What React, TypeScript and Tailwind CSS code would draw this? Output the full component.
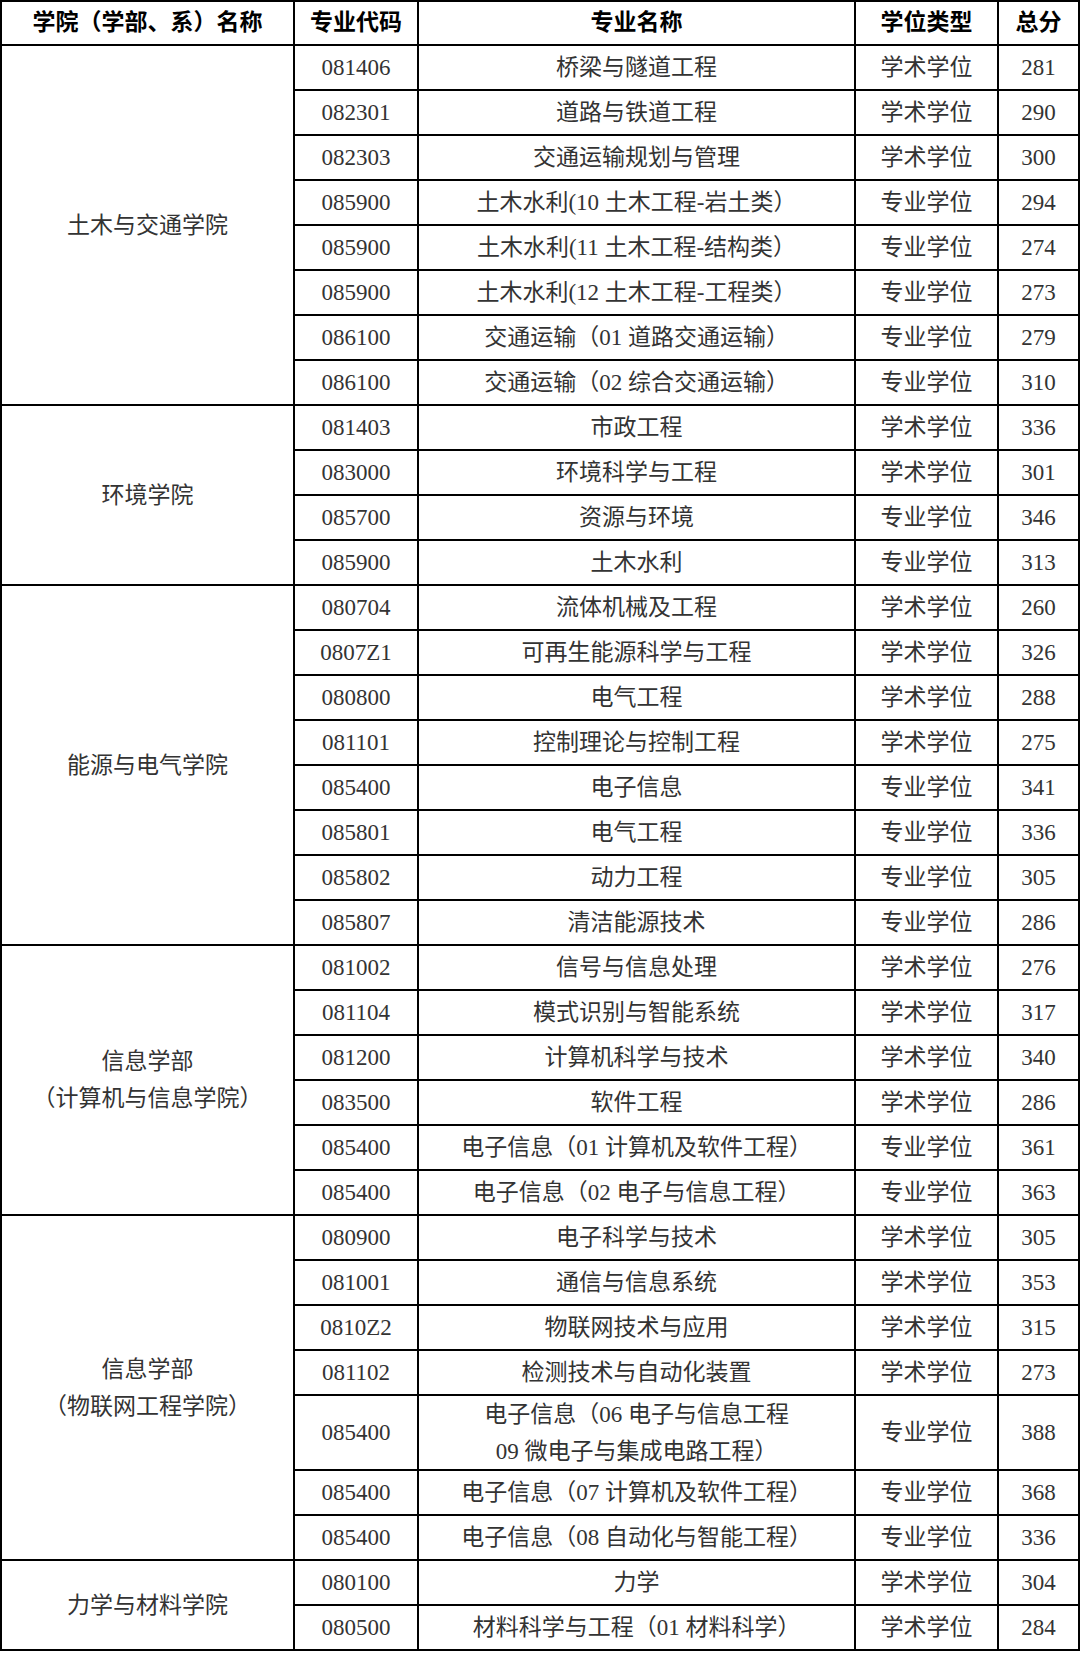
import React from "react";

type Row = { code: string; name: string[]; type: string; score: string };
type Group = { college: string[]; span: string; rows: Row[] };

const A = "学术学位";
const P = "专业学位";

const groups: Group[] = [
  {
    college: ["土木与交通学院"],
    span: "row-span-8",
    rows: [
      { code: "081406", name: ["桥梁与隧道工程"], type: A, score: "281" },
      { code: "082301", name: ["道路与铁道工程"], type: A, score: "290" },
      { code: "082303", name: ["交通运输规划与管理"], type: A, score: "300" },
      { code: "085900", name: ["土木水利(10 土木工程-岩土类）"], type: P, score: "294" },
      { code: "085900", name: ["土木水利(11 土木工程-结构类）"], type: P, score: "274" },
      { code: "085900", name: ["土木水利(12 土木工程-工程类）"], type: P, score: "273" },
      { code: "086100", name: ["交通运输（01 道路交通运输）"], type: P, score: "279" },
      { code: "086100", name: ["交通运输（02 综合交通运输）"], type: P, score: "310" },
    ],
  },
  {
    college: ["环境学院"],
    span: "row-span-4",
    rows: [
      { code: "081403", name: ["市政工程"], type: A, score: "336" },
      { code: "083000", name: ["环境科学与工程"], type: A, score: "301" },
      { code: "085700", name: ["资源与环境"], type: P, score: "346" },
      { code: "085900", name: ["土木水利"], type: P, score: "313" },
    ],
  },
  {
    college: ["能源与电气学院"],
    span: "row-span-8",
    rows: [
      { code: "080704", name: ["流体机械及工程"], type: A, score: "260" },
      { code: "0807Z1", name: ["可再生能源科学与工程"], type: A, score: "326" },
      { code: "080800", name: ["电气工程"], type: A, score: "288" },
      { code: "081101", name: ["控制理论与控制工程"], type: A, score: "275" },
      { code: "085400", name: ["电子信息"], type: P, score: "341" },
      { code: "085801", name: ["电气工程"], type: P, score: "336" },
      { code: "085802", name: ["动力工程"], type: P, score: "305" },
      { code: "085807", name: ["清洁能源技术"], type: P, score: "286" },
    ],
  },
  {
    college: ["信息学部", "（计算机与信息学院）"],
    span: "row-span-6",
    rows: [
      { code: "081002", name: ["信号与信息处理"], type: A, score: "276" },
      { code: "081104", name: ["模式识别与智能系统"], type: A, score: "317" },
      { code: "081200", name: ["计算机科学与技术"], type: A, score: "340" },
      { code: "083500", name: ["软件工程"], type: A, score: "286" },
      { code: "085400", name: ["电子信息（01 计算机及软件工程）"], type: P, score: "361" },
      { code: "085400", name: ["电子信息（02 电子与信息工程）"], type: P, score: "363" },
    ],
  },
  {
    college: ["信息学部", "（物联网工程学院）"],
    span: "row-span-7",
    rows: [
      { code: "080900", name: ["电子科学与技术"], type: A, score: "305" },
      { code: "081001", name: ["通信与信息系统"], type: A, score: "353" },
      { code: "0810Z2", name: ["物联网技术与应用"], type: A, score: "315" },
      { code: "081102", name: ["检测技术与自动化装置"], type: A, score: "273" },
      {
        code: "085400",
        name: ["电子信息（06 电子与信息工程", "09 微电子与集成电路工程）"],
        type: P,
        score: "388",
      },
      { code: "085400", name: ["电子信息（07 计算机及软件工程）"], type: P, score: "368" },
      { code: "085400", name: ["电子信息（08 自动化与智能工程）"], type: P, score: "336" },
    ],
  },
  {
    college: ["力学与材料学院"],
    span: "row-span-2",
    rows: [
      { code: "080100", name: ["力学"], type: A, score: "304" },
      { code: "080500", name: ["材料科学与工程（01 材料科学）"], type: A, score: "284" },
    ],
  },
];

const cell =
  "bg-white flex flex-col items-center justify-center text-center whitespace-nowrap";
const body = `${cell} text-[#333333] text-[23px] leading-[37px]`;
const head = `${cell} text-black text-[23px] font-bold leading-[30px]`;

export default function App() {
  return (
    <div
      className="w-[1080px] h-[1653px] bg-white"
      style={{ fontFamily: '"Liberation Serif", "Noto Sans CJK SC", serif' }}
    >
      <div className="grid grid-cols-[291px_122px_435px_141px_79px] grid-rows-[42px_repeat(30,43px)_73px_repeat(4,43px)] gap-[2px] p-[2px] bg-black w-[1080px]">
        <div className={head}>学院（学部、系）名称</div>
        <div className={head}>专业代码</div>
        <div className={head}>专业名称</div>
        <div className={head}>学位类型</div>
        <div className={head}>总分</div>
        {groups.map((g, gi) => (
          <React.Fragment key={gi}>
            <div className={`${body} ${g.span} leading-[36px]`}>
              {g.college.map((c, i) => (
                <span key={i}>{c}</span>
              ))}
            </div>
            {g.rows.map((r, ri) => (
              <React.Fragment key={ri}>
                <div className={body}>{r.code}</div>
                <div className={body}>
                  {r.name.map((n, i) => (
                    <span key={i}>{n}</span>
                  ))}
                </div>
                <div className={body}>{r.type}</div>
                <div className={body}>{r.score}</div>
              </React.Fragment>
            ))}
          </React.Fragment>
        ))}
      </div>
    </div>
  );
}
